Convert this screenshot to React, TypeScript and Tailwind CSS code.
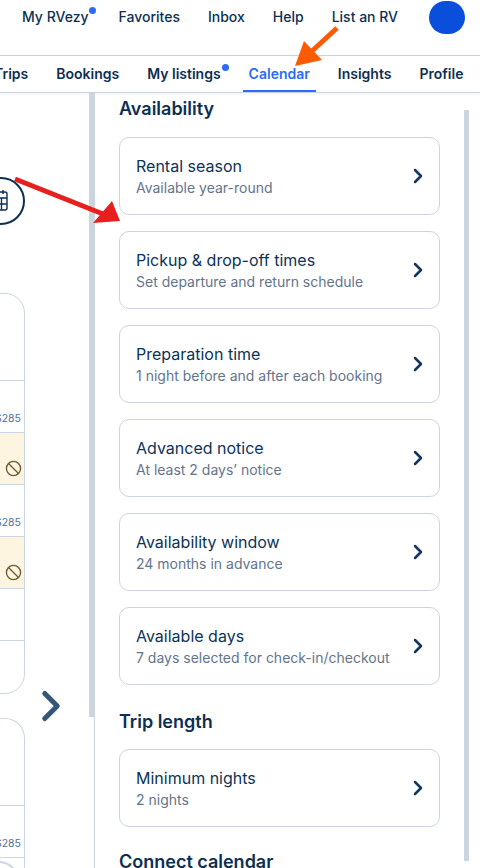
import { Ban, ChevronRight } from "lucide-react";

const navItems = ["My RVezy", "Favorites", "Inbox", "Help", "List an RV"];
const tabs = ["Trips", "Bookings", "My listings", "Calendar", "Insights", "Profile"];
const availability = [
  ["Rental season", "Available year-round"],
  ["Pickup & drop-off times", "Set departure and return schedule"],
  ["Preparation time", "1 night before and after each booking"],
  ["Advanced notice", "At least 2 days’ notice"],
  ["Availability window", "24 months in advance"],
  ["Available days", "7 days selected for check-in/checkout"],
];

function SettingCard({ title, sub }: { title: string; sub: string }) {
  return (
    <div className="flex h-[78px] w-[321px] items-center justify-between rounded-[10px] border border-[#cbd5e1] pl-4 pr-[9px]">
      <div className="flex flex-col pt-[2px]">
        <span className="text-[16px] leading-[22px] text-[#0c3358]">{title}</span>
        <span className="text-[14px] leading-[22px] text-[#64748b]">{sub}</span>
      </div>
      <ChevronRight size={24} strokeWidth={2.5} className="text-[#0f3560]" />
    </div>
  );
}

function PriceRow() {
  return (
    <div className="flex h-[52px] items-end justify-end border-b border-[#cbd5e1] pb-[6px] pr-[3px] text-[10.5px] leading-[14px] text-[#52708f]">
      $285
    </div>
  );
}

function BlockedRow() {
  return (
    <div className="flex h-[52px] items-end justify-end border-b border-[#cbd5e1] bg-[#fef5e1] pb-[7px] pr-[2px]">
      <Ban size={17} strokeWidth={1.9} className="text-[#6e5a30]" />
    </div>
  );
}

export default function App() {
  return (
    <div className="relative flex h-[868px] w-[480px] flex-col overflow-hidden bg-white font-['Inter',sans-serif]">
      <header className="flex h-[56px] shrink-0 items-start justify-end gap-[28px] border-b border-[#cbd5e1] pr-[15px] pt-[1px]">
        {navItems.map((item) => (
          <span key={item} className={`relative mt-[6px] text-[14px] font-medium leading-[20px] text-[#0c2f52] ${item === "My RVezy" ? "mr-[2px]" : ""}`}>
            {item}
            {item === "My RVezy" && <span className="absolute -right-[7px] top-0 h-[7px] w-[7px] rounded-full bg-[#2b6cf6]" />}
          </span>
        ))}
        <div className="ml-[3px] h-[33px] w-[36px] rounded-full bg-[#0a4fdc]" />
      </header>

      <nav className="flex h-[37px] shrink-0 items-stretch gap-4 overflow-hidden border-b border-[#cbd5e1] shadow-[0_1px_3px_rgba(15,40,70,0.06)]">
        {tabs.map((tab, i) => (
          <div
            key={tab}
            className={`relative flex shrink-0 items-center px-[6px] text-[14px] font-semibold leading-[20px] ${i === 0 ? "-ml-[12px]" : ""} ${tab === "Calendar" ? "border-b-2 border-[#2b6cf6] pt-[2px] text-[#2b6cf6]" : "text-[#0c2f52]"}`}
          >
            {tab}
            {tab === "My listings" && <span className="absolute right-[-2px] top-[8px] h-[7px] w-[7px] rounded-full bg-[#2b6cf6]" />}
          </div>
        ))}
      </nav>

      <main className="relative flex min-h-0 flex-1">
        <div className="flex w-[95px] shrink-0">
          <section className="flex w-[89px] shrink-0 flex-col overflow-hidden">
            <div className="ml-[-23px] mt-[84px] flex h-[48px] w-[48px] shrink-0 items-center justify-center rounded-full border-2 border-[#0c2f52]">
              <svg width="22" height="24" viewBox="0 0 22 24" fill="none" stroke="#0c2f52" strokeWidth="1.4" className="-ml-[4px] shrink-0">
                <rect x="3" y="3" width="16" height="18" rx="2" />
                <path d="M3 9h16M3 15h16M8.5 9v12M13.5 9v12M7 1v4M15 1v4" />
              </svg>
            </div>
            <div className="ml-[-176px] mt-[68px] w-[201px] shrink-0 rounded-[20px] border border-[#cbd5e1]">
              <div className="h-[87px] border-b border-[#cbd5e1]" />
              <PriceRow />
              <BlockedRow />
              <PriceRow />
              <BlockedRow />
              <div className="h-[52px] border-b border-[#cbd5e1]" />
              <div className="h-[52px]" />
            </div>
            <div className="ml-[-176px] mt-[24px] w-[201px] shrink-0 rounded-t-[20px] border-x border-t border-[#cbd5e1]">
              <div className="h-[87px] border-b border-[#cbd5e1]" />
              <PriceRow />
              <div className="relative h-[40px] overflow-hidden">
                <div className="absolute right-[5px] top-[3px] h-[40px] w-[40px] rounded-full border-2 border-[#cbd5e1]" />
              </div>
            </div>
          </section>
          <div className="w-[6px] border-r border-[#cbd5e1]">
            <div className="h-[624px] w-[6px] bg-[#cbd5e0]" />
          </div>
        </div>

        <ChevronRight size={50} strokeWidth={2.4} className="absolute left-[26px] top-[588px] text-[#345679]" />

        <section className="flex min-w-0 flex-1 overflow-hidden">
          <div className="ml-[24px] w-[345px] shrink-0">
            <h2 className="mt-[4px] text-[18px] font-semibold leading-[24px] text-[#0c2f52]">Availability</h2>
            <div className="mt-[16px] flex flex-col gap-4">
              {availability.map(([title, sub]) => (
                <SettingCard key={title} title={title} sub={sub} />
              ))}
            </div>
            <h2 className="mt-[25px] text-[18px] font-semibold leading-[24px] text-[#0c2f52]">Trip length</h2>
            <div className="mt-[15px]">
              <SettingCard title="Minimum nights" sub="2 nights" />
            </div>
            <h2 className="mt-[23px] text-[18px] font-semibold leading-[24px] text-[#0c2f52]">Connect calendar</h2>
          </div>
          <div className="mt-[17px] h-[751px] w-[5px] shrink-0 bg-[#cbd5e0]" />
        </section>
      </main>

      <svg className="pointer-events-none absolute left-0 top-0" width="480" height="868" fill="none">
        <path d="M15 179 L103 214" stroke="#e81f1f" strokeWidth="5" />
        <path d="M120 221 L93 223 L112 201 Z" fill="#e81f1f" />
        <path d="M337 28 L312 51" stroke="#fb5b05" strokeWidth="5" />
        <path d="M295 66 L304 41 L322 60 Z" fill="#fb5b05" />
      </svg>
    </div>
  );
}
